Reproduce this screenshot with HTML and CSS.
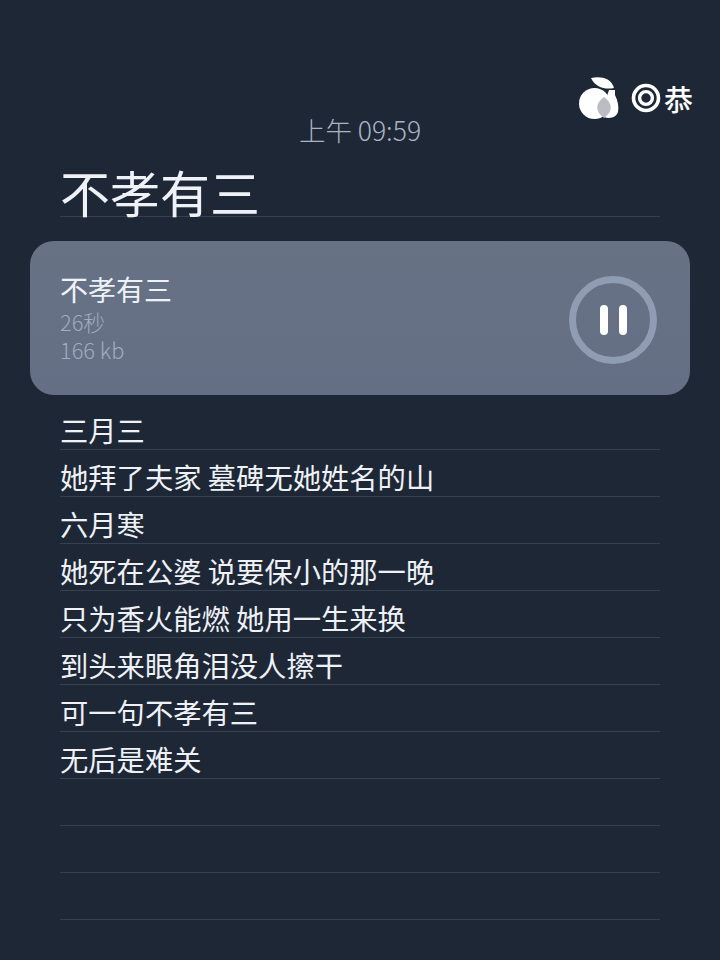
FILE: index.html
```html
<!DOCTYPE html>
<html lang="zh-CN">
<head>
  <meta charset="UTF-8" />
  <title>不孝有三</title>
  <link rel="stylesheet" href="styles.css">
</head>
<body>
  <div class="logo">
    <svg class="logo-fruit" width="42" height="44" viewBox="0 0 42 44">
      <path d="M13 2 C21 0 33 1 36 12 C27 14 17 11 13 2 Z" fill="#fff"/>
      <path d="M31 14 L37 14 L37 19 C40 25 41 31 40 36 C38 42 31 43 26 41 L29 20 Z" fill="#fff"/>
      <circle cx="16.5" cy="27.5" r="15.5" fill="#fff"/>
      <path d="M26 21 C35 27 35 36 26 42 C17 36 17 27 26 21 Z" fill="#bcbdc2"/>
    </svg>
    <svg class="logo-target" width="30" height="30" viewBox="0 0 30 30">
      <circle cx="15" cy="15" r="12.5" fill="none" stroke="#fff" stroke-width="3.6"/>
      <circle cx="15" cy="15" r="6.4" fill="none" stroke="#fff" stroke-width="3.4"/>
    </svg>
    <span class="logo-text">恭</span>
  </div>

  <div class="time">上午 09:59</div>

  <div class="note">
    <h1 class="title">不孝有三</h1>

    <div class="player">
      <div class="player-info">
        <div class="player-name">不孝有三</div>
        <div class="player-meta">26秒</div>
        <div class="player-meta">166 kb</div>
      </div>
      <div class="pause-btn">
        <span class="pause-bar"></span>
        <span class="pause-bar"></span>
      </div>
    </div>

    <div class="lines">
      <div class="line">三月三</div>
      <div class="line">她拜了夫家 墓碑无她姓名的山</div>
      <div class="line">六月寒</div>
      <div class="line">她死在公婆 说要保小的那一晚</div>
      <div class="line">只为香火能燃 她用一生来换</div>
      <div class="line">到头来眼角泪没人擦干</div>
      <div class="line">可一句不孝有三</div>
      <div class="line">无后是难关</div>
      <div class="line"></div>
      <div class="line"></div>
      <div class="line"></div>
    </div>
  </div>
</body>
</html>
```

FILE: styles.css
```css
html, body {
  height: 100%;
}

body {
  margin: 0;
  background: #1e2735;
  color: #eef1f6;
  font-family: "Noto Sans CJK SC", "Noto Sans", sans-serif;
  overflow: hidden;
}

.logo {
  position: absolute;
  top: 76px;
  left: 578px;
  display: flex;
  align-items: center;
  gap: 11px;
  color: #fff;
}

.logo-text {
  margin-left: -8px;
  font-size: 29px;
  line-height: 44px;
  font-weight: 500;
}

.time {
  padding-top: 110px;
  height: 40px;
  line-height: 40px;
  text-align: center;
  font-size: 26.5px;
  font-weight: 300;
  color: #a8b4c6;
}

.note {
  padding: 0 60px;
}

.title {
  margin: 0;
  padding-top: 16px;
  height: 50px;
  line-height: 50px;
  font-size: 50px;
  font-weight: 400;
  border-bottom: 1px solid #364050;
}

.player {
  margin: 24px -30px 8px;
  height: 154px;
  padding: 0 33px 0 30px;
  display: flex;
  align-items: center;
  justify-content: space-between;
  background: linear-gradient(#677285, #646f85);
  border-radius: 24px;
}

.player-info {
  padding-bottom: 1px;
}

.player-name {
  font-size: 28px;
  line-height: 37px;
}

.player-meta {
  font-size: 21.8px;
  line-height: 28px;
  font-weight: 300;
  color: #a0acbf;
}

.pause-btn {
  width: 88px;
  height: 88px;
  margin-top: 4px;
  box-sizing: border-box;
  border: 7px solid #8f9cb1;
  border-radius: 50%;
  display: flex;
  align-items: center;
  justify-content: center;
  gap: 11px;
}

.pause-bar {
  width: 8px;
  height: 30px;
  background: #fff;
  border-radius: 4px;
}

.line {
  padding-top: 8px;
  height: 38px;
  line-height: 38px;
  font-size: 28.3px;
  border-bottom: 1px solid #364050;
}
```
